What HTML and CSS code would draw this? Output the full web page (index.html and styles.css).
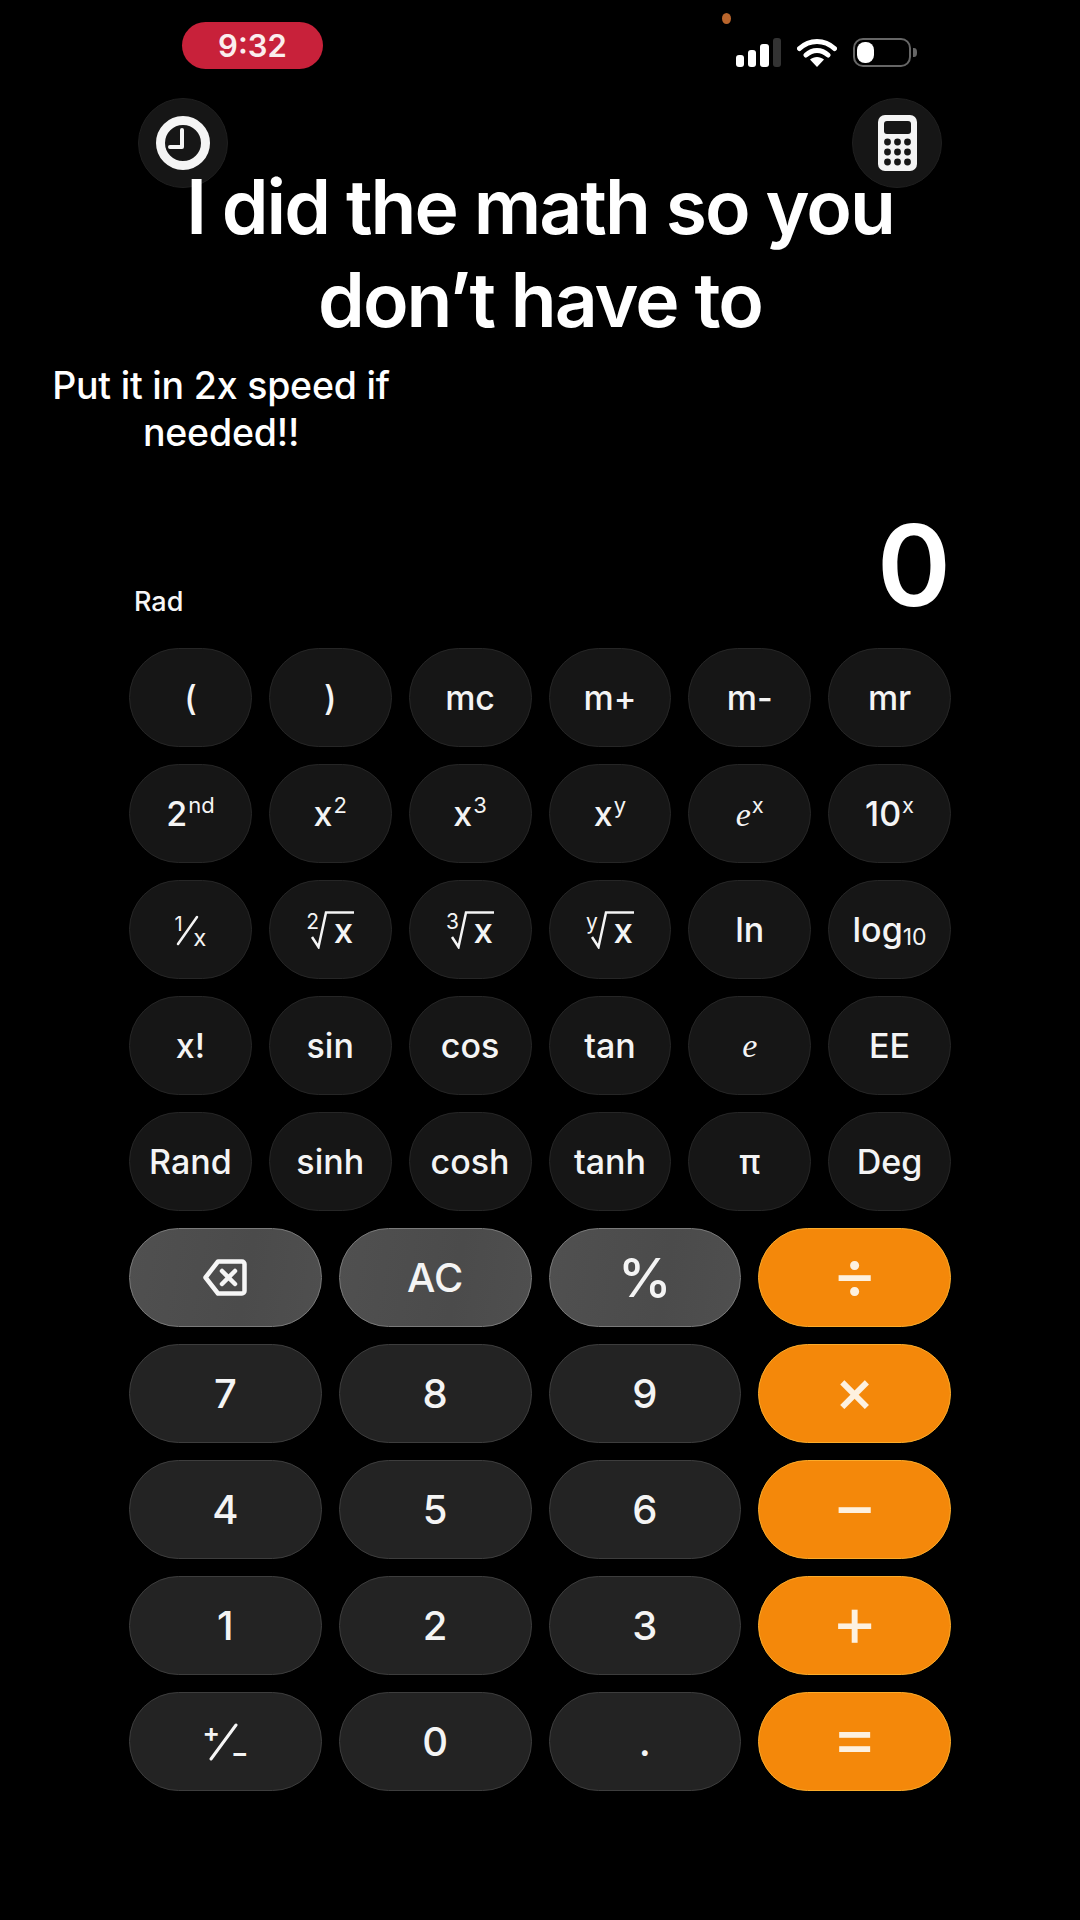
FILE: index.html
```html
<!DOCTYPE html>
<html lang="en">
<head>
<meta charset="utf-8">
<title>Calculator</title>
<link rel="stylesheet" href="styles.css">
</head>
<body>
<div class="phone">
  <header class="status">
    <div class="time">9:32</div>
    <div class="indicators">
      <svg class="signal" viewBox="0 0 45 29" width="45" height="29"><rect class="on" x="0" y="17" width="8" height="12" rx="3"/><rect class="on" x="12" y="12" width="8" height="17" rx="3"/><rect class="on" x="24" y="6" width="9" height="23" rx="3"/><rect class="off" x="37" y="0" width="8" height="29" rx="3"/></svg>
      <svg class="wifi" viewBox="0 0 40 29" width="40" height="29"><path d="M2.5 10.5C12.5 1 27.5 1 37.5 10.5M9 17C15.500 11 24.500 11 31 17" fill="none" stroke="#fff" stroke-width="5" stroke-linecap="round"/><path d="M20 29l-7-7.500c4-3.500 10-3.500 14 0z" fill="#fff"/></svg>
      <svg class="battery" viewBox="0 0 64 29" width="64" height="29"><rect x="1" y="1" width="56" height="27" rx="9" fill="none" stroke="#666" stroke-width="2"/><rect x="4" y="4" width="17" height="21" rx="8" fill="#fff"/><path d="M60 10h1a3 4 0 0 1 3 4v1a3 4 0 0 1-3 4h-1z" fill="#666"/></svg>
    </div>
  </header>
  <span class="mic-dot"></span>

  <nav class="toolbar">
    <div class="round">
      <svg viewBox="0 0 54 54" width="54" height="54"><circle cx="27" cy="27" r="22.500" fill="none" stroke="#f4f4f4" stroke-width="9"/><path d="M26 14v17H14" fill="none" stroke="#f4f4f4" stroke-width="4" stroke-linecap="round" stroke-linejoin="round"/></svg>
    </div>
    <div class="round">
      <svg viewBox="0 0 39 56" width="39" height="56"><rect width="39" height="56" rx="7" fill="#f4f4f4"/><rect x="6" y="6" width="27" height="13" rx="3" fill="#161616"/><g fill="#161616"><circle cx="9.500" cy="27" r="3.400"/><circle cx="19.500" cy="27" r="3.400"/><circle cx="29.500" cy="27" r="3.400"/><circle cx="9.500" cy="37" r="3.400"/><circle cx="19.500" cy="37" r="3.400"/><circle cx="29.500" cy="37" r="3.400"/><circle cx="9.500" cy="47" r="3.400"/><circle cx="19.500" cy="47" r="3.400"/><circle cx="29.500" cy="47" r="3.400"/></g></svg>
    </div>
  </nav>

  <h1 class="overlay-title">I did the math so you<br>don’t have to</h1>
  <p class="overlay-caption">Put it in 2x speed if<br>needed!!</p>

  <section class="display">
    <span class="mode">Rad</span>
    <span class="result">0</span>
  </section>

  <main class="keypad">
    <div class="keys sci">
      <button class="key fn">(</button>
      <button class="key fn">)</button>
      <button class="key fn">mc</button>
      <button class="key fn">m+</button>
      <button class="key fn">m-</button>
      <button class="key fn">mr</button>

      <button class="key fn"><span>2<sup class="up">nd</sup></span></button>
      <button class="key fn"><span>x<sup class="up">2</sup></span></button>
      <button class="key fn"><span>x<sup class="up">3</sup></span></button>
      <button class="key fn"><span>x<sup class="up">y</sup></span></button>
      <button class="key fn"><span><i class="math">e</i><sup class="up">x</sup></span></button>
      <button class="key fn"><span>10<sup class="up">x</sup></span></button>

      <button class="key fn"><span class="frac"><span class="frac-top">1</span><svg class="stack-svg" viewBox="0 0 30 32" width="30" height="32"><path d="M4 30L23 3" fill="none" stroke="#f4f4f4" stroke-width="2.500" stroke-linecap="round"/></svg><span class="frac-bot">x</span></span></button>
      <button class="key fn"><span class="root"><span class="idx">2</span><svg class="stack-svg" viewBox="0 0 48 38" width="48" height="38"><path d="M6 26l6.500 10L20 1.500H48" fill="none" stroke="#f4f4f4" stroke-width="2.500"/></svg><span class="rad">x</span></span></button>
      <button class="key fn"><span class="root"><span class="idx">3</span><svg class="stack-svg" viewBox="0 0 48 38" width="48" height="38"><path d="M6 26l6.500 10L20 1.500H48" fill="none" stroke="#f4f4f4" stroke-width="2.500"/></svg><span class="rad">x</span></span></button>
      <button class="key fn"><span class="root"><span class="idx">y</span><svg class="stack-svg" viewBox="0 0 48 38" width="48" height="38"><path d="M6 26l6.500 10L20 1.500H48" fill="none" stroke="#f4f4f4" stroke-width="2.500"/></svg><span class="rad">x</span></span></button>
      <button class="key fn">ln</button>
      <button class="key fn"><span>log<sub class="down">10</sub></span></button>

      <button class="key fn">x!</button>
      <button class="key fn">sin</button>
      <button class="key fn">cos</button>
      <button class="key fn">tan</button>
      <button class="key fn"><i class="math">e</i></button>
      <button class="key fn">EE</button>

      <button class="key fn">Rand</button>
      <button class="key fn">sinh</button>
      <button class="key fn">cosh</button>
      <button class="key fn">tanh</button>
      <button class="key fn">π</button>
      <button class="key fn">Deg</button>
    </div>

    <div class="keys main">
      <button class="key util"><svg viewBox="0 0 44 37" width="44" height="37"><path d="M15 2.500H39a2.500 2.500 0 0 1 2.500 2.500V32a2.500 2.500 0 0 1-2.500 2.500H15L2.500 18.500z" fill="none" stroke="#f6f6f6" stroke-width="4.500" stroke-linejoin="round"/><path d="M19 12l13 13M32 12L19 25" fill="none" stroke="#f6f6f6" stroke-width="4.500" stroke-linecap="round"/></svg></button>
      <button class="key util num">AC</button>
      <button class="key util pct">%</button>
      <button class="key op">÷</button>

      <button class="key digit num">7</button>
      <button class="key digit num">8</button>
      <button class="key digit num">9</button>
      <button class="key op times">×</button>

      <button class="key digit num">4</button>
      <button class="key digit num">5</button>
      <button class="key digit num">6</button>
      <button class="key op">−</button>

      <button class="key digit num">1</button>
      <button class="key digit num">2</button>
      <button class="key digit num">3</button>
      <button class="key op">+</button>

      <button class="key digit"><span class="sign"><span class="sign-plus">+</span><svg class="stack-svg" viewBox="0 0 46 38" width="46" height="38"><path d="M9 36L34 2" fill="none" stroke="#f6f6f6" stroke-width="3" stroke-linecap="round"/></svg><span class="sign-minus">−</span></span></button>
      <button class="key digit num">0</button>
      <button class="key digit num">.</button>
      <button class="key op">=</button>
    </div>
  </main>
</div>
</body>
</html>
```
FILE: styles.css
```css
* { box-sizing: border-box; }
html, body { margin: 0; padding: 0; background: #000; }
body { font-family: Inter, "Liberation Sans", sans-serif; color: #f6f6f6; }

.phone { position: relative; width: 1080px; height: 1920px; background: #000; overflow: hidden; }

.status { display: flex; align-items: flex-start; justify-content: space-between; padding: 22px 163px 0 182px; }
.time { width: 141px; height: 47px; border-radius: 23.500px; background: #c8213a; color: #fbeeee; font-size: 31px; font-weight: 600; line-height: 47px; text-align: center; }
.indicators { display: flex; gap: 16px; margin-top: 16px; }
.indicators svg { display: block; }
.signal .on { fill: #fff; }
.signal .off { fill: #333; }
.mic-dot { position: absolute; left: 722px; top: 13px; width: 9px; height: 11px; border-radius: 50%; background: #b9652c; }

.toolbar { display: flex; justify-content: space-between; padding: 0 138px; margin-top: 29px; }
.round { width: 90px; height: 90px; border-radius: 50%; background: #161616; border: 1px solid #1f1f1f; display: flex; align-items: center; justify-content: center; }

.overlay-title { position: absolute; left: 0; right: 0; top: 160px; margin: 0; text-align: center; font-size: 75px; line-height: 93px; font-weight: 600; color: #fff; letter-spacing: -2px; }
.overlay-caption { position: absolute; left: 21px; width: 400px; top: 362px; margin: 0; text-align: center; font-size: 37.500px; line-height: 47px; font-weight: 500; color: #fff; letter-spacing: -0.200px; }

.display { display: flex; justify-content: space-between; align-items: flex-end; height: 460px; padding: 0 129px 17px 134px; }
.mode { font-size: 27px; font-weight: 500; line-height: 30px; margin-bottom: 14px; }
.result { font-size: 112px; font-weight: 600; line-height: 112px; color: #fff; margin-bottom: 10px; }

.keypad { display: flex; flex-direction: column; gap: 17px; padding: 0 129px; }
.keys { display: grid; gap: 17px; grid-auto-rows: 99px; }
.sci { grid-template-columns: repeat(6, 1fr); }
.main { grid-template-columns: repeat(4, 1fr); }

.key { display: flex; align-items: center; justify-content: center; padding: 0; margin: 0; border-radius: 49.500px; font-family: inherit; font-size: 34px; font-weight: 500; color: #f4f4f4; white-space: nowrap; border: 1.500px solid; }
.fn { background: #161616; border-color: #262626; }
.digit { background: #232323; border-color: #3d3d3d; }
.util { background: linear-gradient(100deg, #505050, #4b4b4b 60%, #4f4f4f); border-color: #7a7a7a; }
.op { background: #f4880a; border-color: #fbab2a; color: #fdf1e0; font-size: 70px; font-weight: 400; padding-bottom: 10px; }
.times { font-size: 60px; font-weight: 500; padding-bottom: 8px; }
.num { font-size: 40px; }
.pct { font-size: 54px; }

.up { font-size: 22px; font-weight: 400; line-height: 0; vertical-align: 13px; margin-left: 1px; }
.down { font-size: 23px; line-height: 0; vertical-align: -3px; font-weight: 400; }
.math { font-family: "Liberation Serif", serif; font-style: italic; font-weight: 400; font-size: 34px; }

.frac, .root, .sign { display: inline-grid; grid-template: 1fr / 1fr; }
.frac > *, .root > *, .sign > * { grid-area: 1 / 1; }
.stack-svg { display: block; }
.frac { width: 32px; height: 32px; }
.frac-top { justify-self: start; align-self: start; font-size: 20px; line-height: 20px; font-weight: 400; }
.frac-bot { justify-self: end; align-self: end; font-size: 24px; line-height: 16px; font-weight: 400; }
.root { width: 48px; height: 38px; }
.idx { justify-self: start; align-self: start; font-size: 21px; line-height: 20px; font-weight: 400; margin-top: 1px; }
.rad { justify-self: end; align-self: end; font-size: 35px; line-height: 30px; margin-right: 1px; margin-bottom: 4px; }
.sign { width: 46px; height: 38px; }
.sign-plus { justify-self: start; align-self: start; font-size: 26px; line-height: 20px; font-weight: 600; }
.sign-minus { justify-self: end; align-self: end; font-size: 26px; line-height: 16px; font-weight: 600; }
```
